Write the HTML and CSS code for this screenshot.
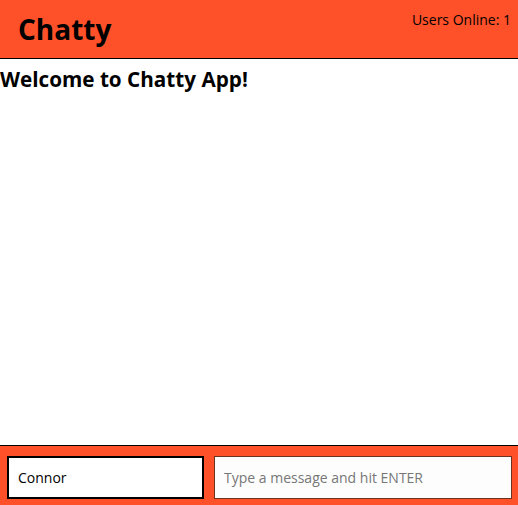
FILE: index.html
```html
<!DOCTYPE html>
<html>
<head>
<meta charset="utf-8">
<link rel="stylesheet" href="styles.css">
</head>
<body>
<nav class="navbar">
  <a class="navbar-brand">Chatty</a>
  <span class="users-online">Users Online: 1</span>
</nav>
<main class="messages">
  <h2 class="welcome">Welcome to Chatty App!</h2>
</main>
<footer class="chatbar">
  <input class="chatbar-username" value="Connor">
  <input class="chatbar-message" placeholder="Type a message and hit ENTER">
</footer>
</body>
</html>
```
FILE: styles.css
```css
* { box-sizing: border-box; }
html, body { margin: 0; height: 100%; }
body {
  font-family: "Open Sans", sans-serif;
  display: flex;
  flex-direction: column;
  color: #000;
}
.navbar {
  background: #ff5129;
  height: 59px;
  border-bottom: 1px solid #000;
  display: flex;
  justify-content: space-between;
  align-items: flex-start;
  padding: 0 7px 0 18px;
  flex-shrink: 0;
}
.navbar-brand {
  font-size: 28px;
  font-weight: 700;
  line-height: 58px;
}
.users-online {
  font-size: 14px;
  margin-top: 10px;
}
.messages {
  flex: 1;
}
.welcome {
  margin: 6px 0 0;
  font-size: 20.7px;
  font-weight: 700;
  line-height: 28px;
}
.chatbar {
  background: #ff5129;
  border-top: 1px solid #000;
  height: 60px;
  flex-shrink: 0;
  display: flex;
  gap: 10px;
  padding: 10px 6px 6px 7px;
}
.chatbar input {
  font-family: "Open Sans", sans-serif;
  font-size: 14px;
  height: 43px;
  padding: 0 9px;
  outline: none;
}
.chatbar-username {
  width: 197px;
  border: 2px solid #000;
  background: #fff;
  color: #000;
}
.chatbar-message {
  flex: 1;
  border: 1px solid #6b3322;
  background: #fdfdfd;
}
.chatbar-message::placeholder { color: #777; }
```
